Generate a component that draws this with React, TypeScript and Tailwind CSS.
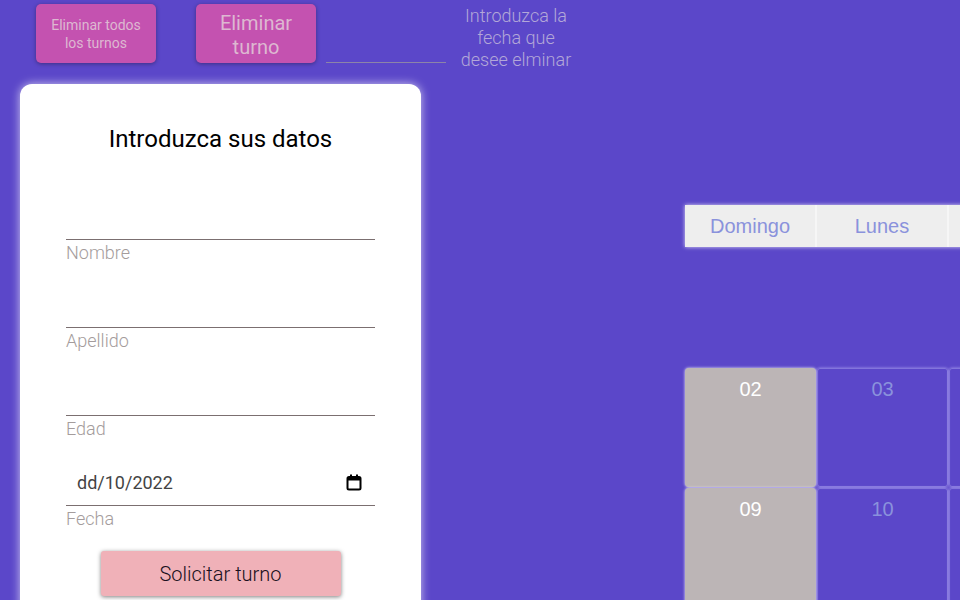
import React from 'react';

const fields = ['Nombre', 'Apellido', 'Edad'];
const days = ['Domingo', 'Lunes', 'Martes', 'Miércoles', 'Jueves', 'Viernes', 'Sábado'];
const weeks = [
  ['02', '03', '04', '05', '06', '07', '08'],
  ['09', '10', '11', '12', '13', '14', '15'],
];

function CalendarIcon() {
  return (
    <svg width="16" height="17" viewBox="0 0 16 17" fill="none">
      <rect x="1.5" y="3" width="13" height="12.5" rx="1.5" stroke="#000" strokeWidth="2" />
      <rect x="1.5" y="3" width="13" height="3.5" fill="#000" />
      <rect x="4" y="0.5" width="2" height="3" fill="#000" />
      <rect x="10" y="0.5" width="2" height="3" fill="#000" />
    </svg>
  );
}

export default function App() {
  return (
    <div className="w-[960px] h-[600px] overflow-hidden bg-[#5b47c9] font-['Roboto',sans-serif] relative">
      <div className="flex items-start h-[67px] pt-[4px] pl-[36px]">
        <button className="w-[120px] h-[59px] rounded-[5px] bg-[#c452b0] shadow-[0_1px_4px_rgba(0,0,0,0.35)] text-[14px] leading-[18px] text-[#ddb8d1] px-2">
          Eliminar todos los turnos
        </button>
        <button className="ml-[40px] w-[120px] h-[59px] rounded-[5px] bg-[#c452b0] shadow-[0_1px_4px_rgba(0,0,0,0.35)] text-[20px] leading-[24px] text-[#ddb8d1] pt-[2px]">
          Eliminar turno
        </button>
        <div className="ml-[10px] mt-[58px] w-[120px] h-px bg-[#8c84a8]" />
        <p className="ml-[10px] mt-[1px] w-[120px] text-center text-[18px] leading-[22px] font-light text-[#b3a7d8]">
          Introduzca la fecha que desee elminar
        </p>
      </div>

      <div className="flex items-start mt-[17px]">
        <div className="ml-[20px] w-[401px] h-[560px] bg-white rounded-[12px] shadow-[0_0_10px_rgba(255,255,255,0.7)] px-[46px] pt-[41px] shrink-0">
          <h2 className="text-center text-[24px] leading-[28px] text-black">Introduzca sus datos</h2>
          <div className="mt-[47px]">
            {fields.map(f => (
              <div key={f} className="mb-[23px]">
                <div className="h-[40px] border-b border-[#7b6f70]" />
                <div className="pt-px text-[18px] leading-[24px] font-light text-[#a49c9c]">{f}</div>
              </div>
            ))}
            <div>
              <div className="h-[42px] border-b border-[#7b6f70] flex items-center justify-between pl-[11px] pr-[13px] pb-[4px]">
                <span className="text-[18px] text-[#444444]">dd/10/2022</span>
                <CalendarIcon />
              </div>
              <div className="pt-px text-[18px] leading-[24px] font-light text-[#a49c9c]">Fecha</div>
            </div>
          </div>
          <div className="flex justify-center mt-[20px]">
            <button className="w-[240px] h-[45px] rounded-[3px] bg-[#f0b1b8] shadow-[0_1px_4px_rgba(0,0,0,0.5)] text-[20px] font-light text-[#1a1020]">
              Solicitar turno
            </button>
          </div>
        </div>

        <div className="ml-[264px] mt-[121px] font-['Liberation_Sans',Arial,sans-serif] shrink-0">
          <div className="grid grid-cols-[repeat(7,130px)] gap-[2px] bg-[#f6f6f6] shadow-[0_0_4px_rgba(255,255,255,0.8)]">
            {days.map(d => (
              <div key={d} className="h-[42px] bg-[#eeeeee] flex items-center justify-center text-[20px] text-[#8a92dc]">
                {d}
              </div>
            ))}
          </div>
          <div className="mt-[121px] grid grid-cols-[repeat(7,131px)] gap-px">
            {weeks.map(w =>
              w.map((n, i) => (
                <div
                  key={n}
                  className={
                    i === 0
                      ? 'h-[119px] rounded-[4px] bg-[#bcb5b6] shadow-[0_0_3px_rgba(255,255,255,0.9)] text-white text-[20px] text-center pt-[6px]'
                      : 'h-[119px] rounded-[3px] border border-[#8375dc] shadow-[0_0_3px_rgba(200,190,255,0.7)] text-[#8a92dc] text-[20px] text-center pt-[5px]'
                  }
                >
                  {n}
                </div>
              ))
            )}
          </div>
        </div>
      </div>
    </div>
  );
}
